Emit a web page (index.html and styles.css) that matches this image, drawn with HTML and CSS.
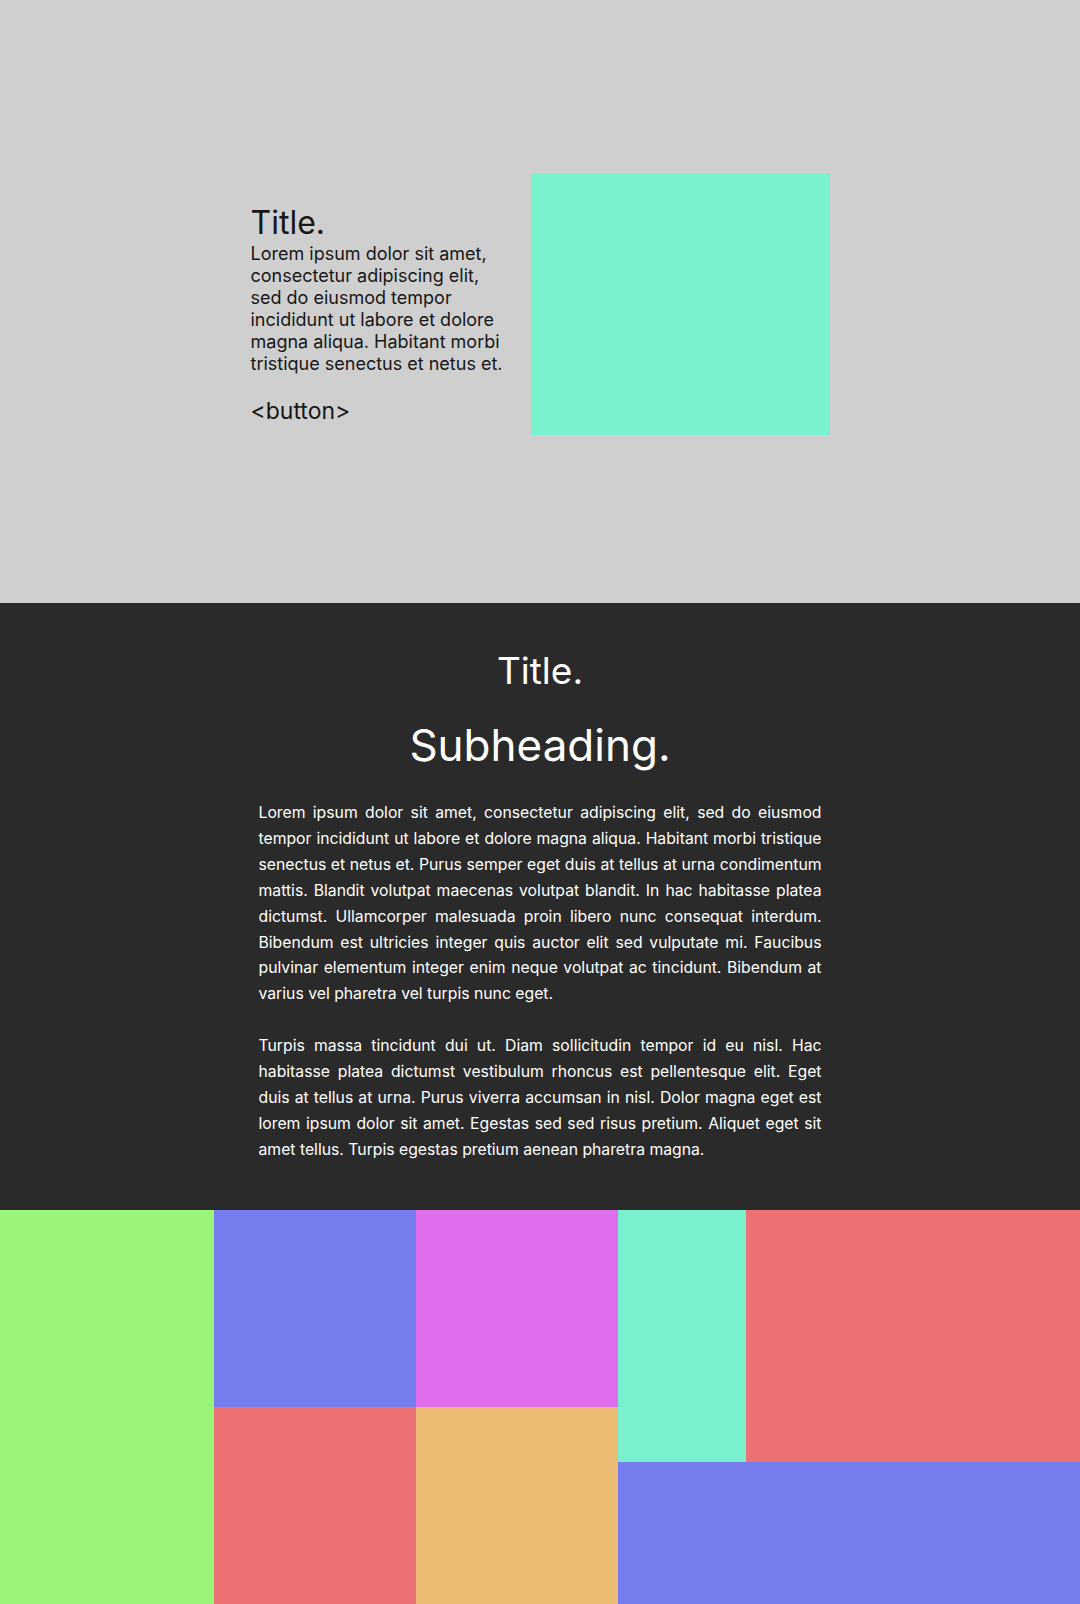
FILE: index.html
```html
<!DOCTYPE html>
<html lang="en">
<head>
<meta charset="utf-8">
<title>Layout</title>
<link rel="stylesheet" href="styles.css">
</head>
<body>
<section class="hero">
  <div class="hero-inner">
    <div class="hero-text">
      <h1 class="hero-title">Title.</h1>
      <p class="hero-copy">Lorem ipsum dolor sit amet, consectetur adipiscing elit, sed do eiusmod tempor incididunt ut labore et dolore magna aliqua. Habitant morbi tristique senectus et netus et.</p>
      <div class="hero-button">&lt;button&gt;</div>
    </div>
    <div class="hero-media"></div>
  </div>
</section>
<section class="article">
  <h2 class="article-title">Title.</h2>
  <h3 class="article-sub">Subheading.</h3>
  <div class="article-body">
    <p>Lorem ipsum dolor sit amet, consectetur adipiscing elit, sed do eiusmod tempor incididunt ut labore et dolore magna aliqua. Habitant morbi tristique senectus et netus et. Purus semper eget duis at tellus at urna condimentum mattis. Blandit volutpat maecenas volutpat blandit. In hac habitasse platea dictumst. Ullamcorper malesuada proin libero nunc consequat interdum. Bibendum est ultricies integer quis auctor elit sed vulputate mi. Faucibus pulvinar elementum integer enim neque volutpat ac tincidunt. Bibendum at varius vel pharetra vel turpis nunc eget.</p>
    <p>Turpis massa tincidunt dui ut. Diam sollicitudin tempor id eu nisl. Hac habitasse platea dictumst vestibulum rhoncus est pellentesque elit. Eget duis at tellus at urna. Purus viverra accumsan in nisl. Dolor magna eget est lorem ipsum dolor sit amet. Egestas sed sed risus pretium. Aliquet eget sit amet tellus. Turpis egestas pretium aenean pharetra magna.</p>
  </div>
</section>
<section class="mosaic">
  <div class="tile green col-a"></div>
  <div class="col-pair">
    <div class="tile blue"></div>
    <div class="tile red"></div>
  </div>
  <div class="col-pair">
    <div class="tile pink"></div>
    <div class="tile orange"></div>
  </div>
  <div class="col-right">
    <div class="right-top">
      <div class="tile teal narrow"></div>
      <div class="tile red wide"></div>
    </div>
    <div class="tile blue right-bottom"></div>
  </div>
</section>
</body>
</html>
```
FILE: styles.css
```css
* { box-sizing: border-box; }
html, body { margin: 0; padding: 0; }
body {
  width: 1080px;
  font-family: Inter, "Noto Sans", "Liberation Sans", sans-serif;
}

.hero {
  background: #cfcfcf;
  height: 603px;
  padding-top: 4px;
  display: flex;
  align-items: center;
  justify-content: center;
}
.hero-inner {
  display: flex;
  align-items: center;
  gap: 24px;
}
.hero-text {
  width: 256px;
  color: #171717;
  padding-top: 22px;
}
.hero-title {
  margin: 0;
  font-size: 32px;
  font-weight: 400;
  line-height: 1.2;
}
.hero-copy {
  margin: 0 0 22px;
  font-size: 18px;
  line-height: 22px;
}
.hero-button {
  font-size: 23px;
  line-height: 28px;
}
.hero-media {
  width: 299px;
  height: 262px;
  background: #79f1cf;
}

.article {
  background: #2a2a2a;
  color: #ffffff;
  height: 607px;
  padding-top: 40px;
  text-align: center;
}
.article-title {
  margin: 0;
  font-size: 37px;
  font-weight: 400;
  line-height: 56px;
}
.article-sub {
  margin: 14px 0 0;
  font-size: 44px;
  font-weight: 400;
  line-height: 64px;
}
.article-body {
  width: 563px;
  margin: 23px auto 0;
  text-align: justify;
  font-size: 15.75px;
  line-height: 25.9px;
}
.article-body p { margin: 0 0 25.9px; }

.mosaic {
  display: flex;
  height: 394px;
}
.col-a { width: 214px; }
.col-pair {
  width: 202px;
  display: flex;
  flex-direction: column;
}
.col-pair .tile { flex: 1; }
.col-right {
  flex: 1;
  display: flex;
  flex-direction: column;
}
.right-top {
  height: 252px;
  display: flex;
}
.narrow { width: 128px; }
.wide { flex: 1; }
.right-bottom { flex: 1; }

.green { background: #99f477; }
.blue { background: #767bee; }
.pink { background: #df6eed; }
.red { background: #ec7175; }
.orange { background: #ecbc75; }
.teal { background: #79f1cf; }
```
